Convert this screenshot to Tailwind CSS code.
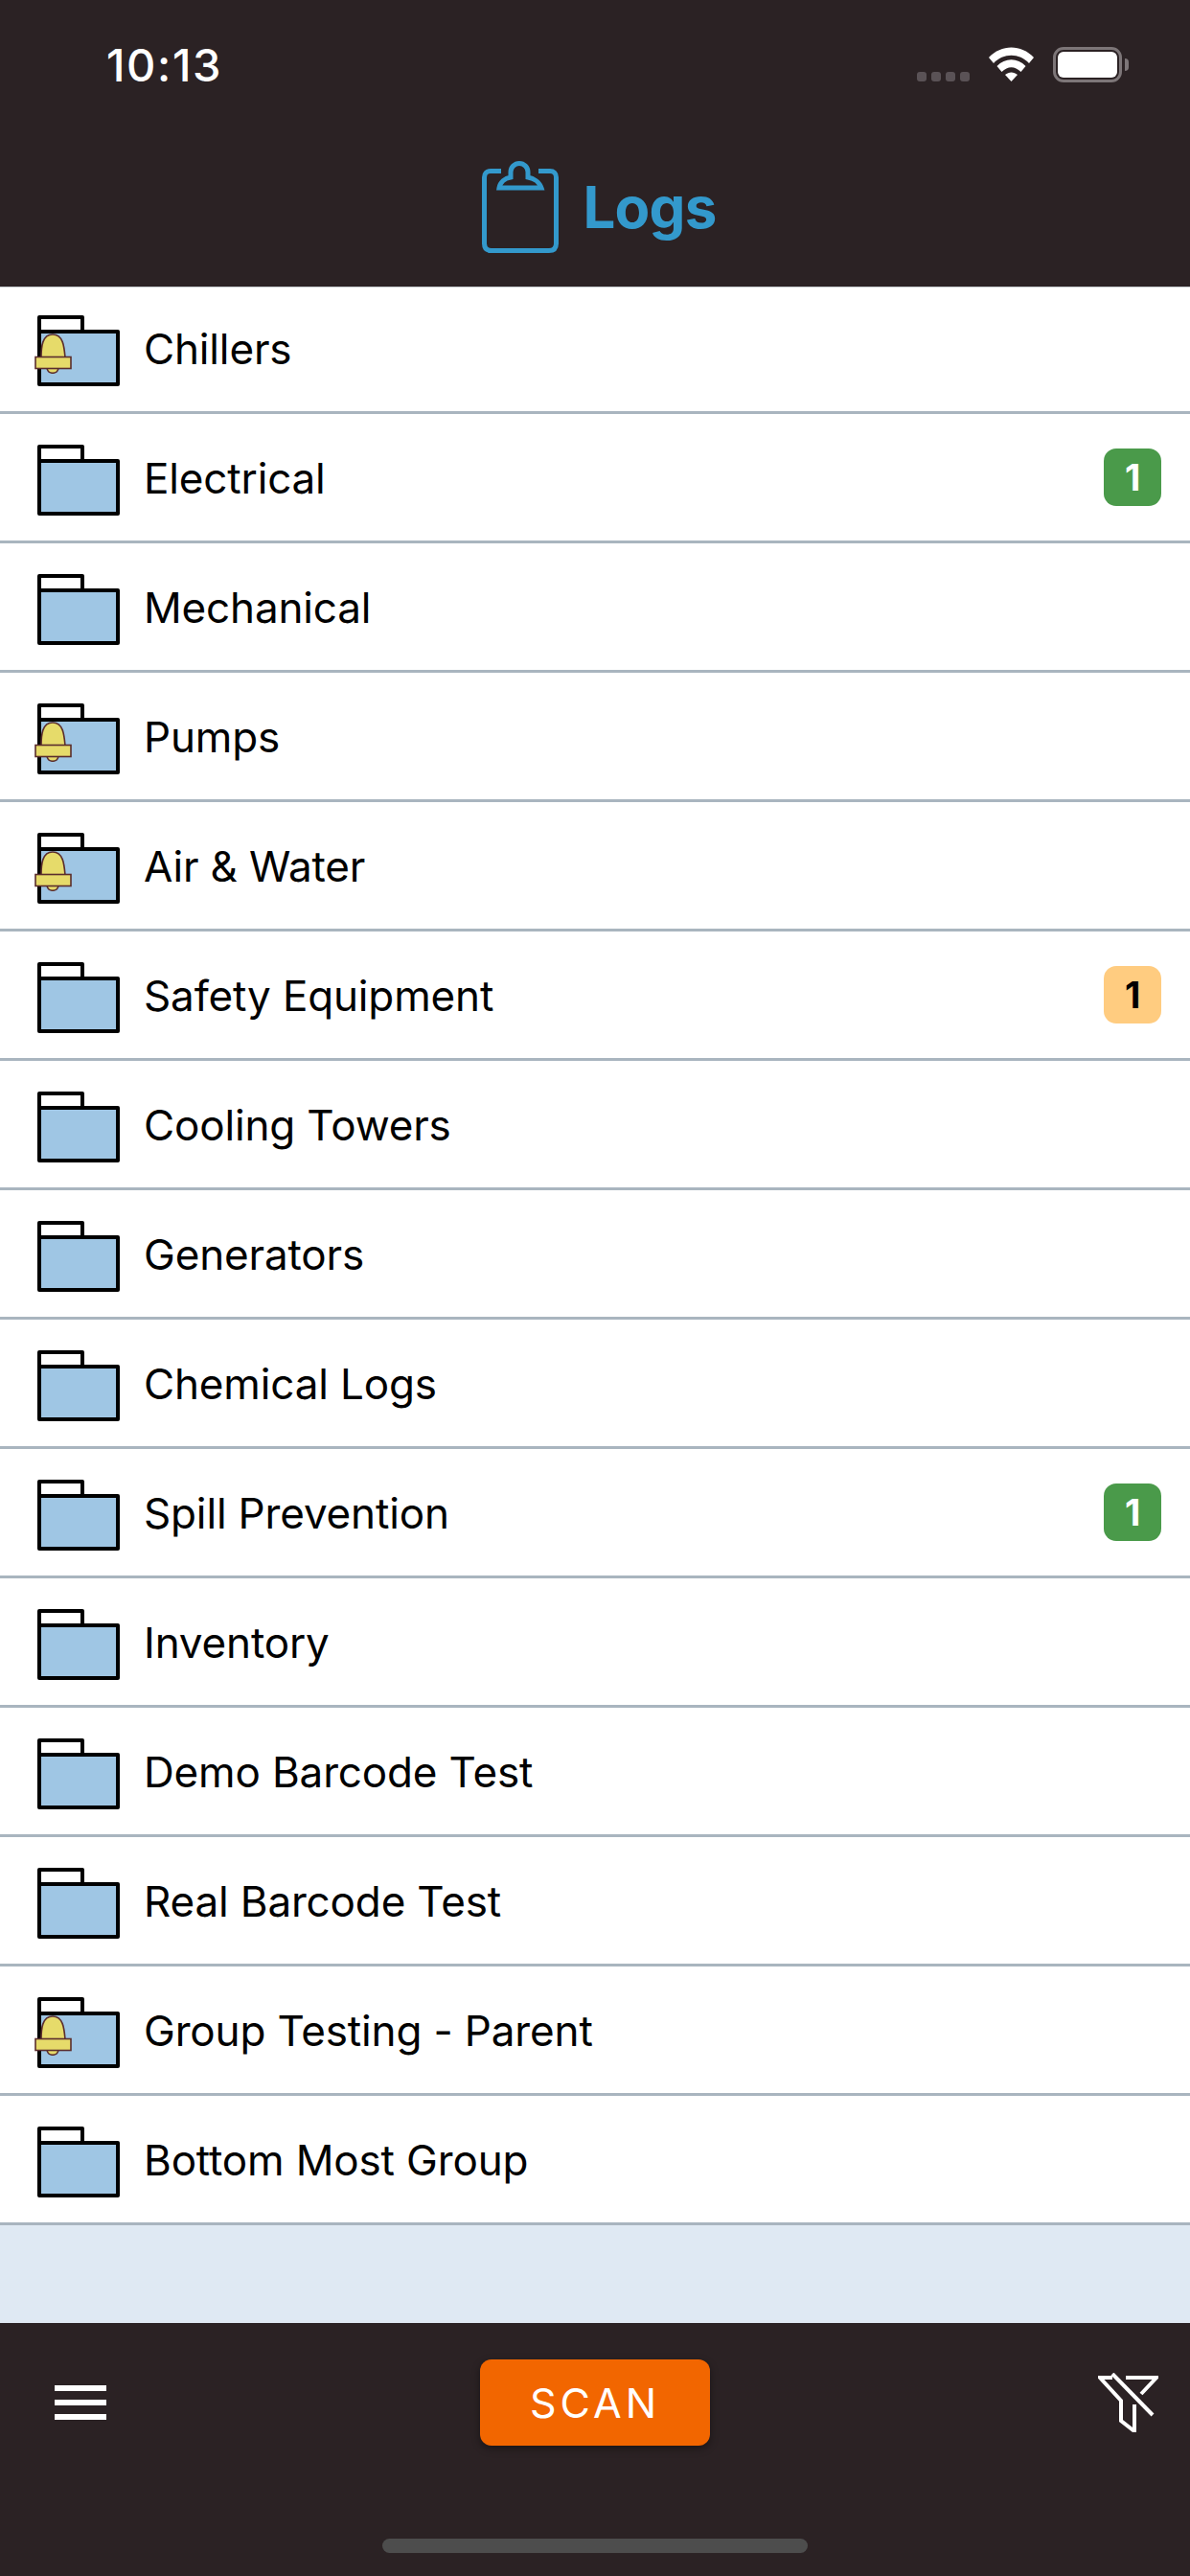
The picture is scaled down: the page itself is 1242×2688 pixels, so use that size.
<!DOCTYPE html>
<html lang="en">
<head>
    <meta charset="UTF-8">
    <meta name="viewport" content="width=device-width, initial-scale=1.0">
    <title>Logs</title>
    <script src="https://cdn.jsdelivr.net/npm/@tailwindcss/browser@4"></script>
</head>
<body class="w-[1242px] h-[2688px] flex flex-col overflow-hidden bg-[#dfe9f3] font-['Inter',sans-serif]">
    <svg width="0" height="0" class="absolute">
        <defs>
            <symbol id="folder" viewBox="0 0 86 74">
                <path d="M2 17V2H47V17" fill="#fff" stroke="#000" stroke-width="4" stroke-linejoin="round"/>
                <rect x="2" y="17" width="82" height="55" fill="#9fc6e4" stroke="#000" stroke-width="4" stroke-linejoin="round"/>
            </symbol>
            <symbol id="bell" viewBox="0 0 39 42">
                <path d="M7 25C7 14 8 1 19 1C30 1 31 14 32 25Z" fill="#e6db6a" stroke="#5a2d2d" stroke-width="1.6"/>
                <path d="M13 36C14 43 24 43 25 36Z" fill="#e6db6a" stroke="#5a2d2d" stroke-width="1.6"/>
                <rect x="1" y="24.500" width="37" height="12" fill="#e6db6a" stroke="#5a2d2d" stroke-width="1.6"/>
            </symbol>
        </defs>
    </svg>

    <header class="relative z-10 h-[300px] shrink-0 bg-[#2b2224] border-b border-[#c8ccd0]">
        <div class="flex h-[168px] items-start">
            <div class="ml-[111px] mt-[38px] text-[47px] leading-[60px] font-medium tracking-[1.6px] text-white">10:13</div>
            <div class="ml-auto mt-[49px] mr-[64px] flex items-start">
                <div class="mt-[26px] flex gap-[5px]">
                    <span class="w-[10px] h-[10px] rounded-[3px] bg-[#5a5256]"></span>
                    <span class="w-[10px] h-[10px] rounded-[3px] bg-[#5a5256]"></span>
                    <span class="w-[10px] h-[10px] rounded-[3px] bg-[#5a5256]"></span>
                    <span class="w-[10px] h-[10px] rounded-[3px] bg-[#5a5256]"></span>
                </div>
                <svg class="ml-[20px]" width="47" height="36" viewBox="0 0 47 36">
                    <path d="M0 11C13 -3 34 -3 47 11L42 17C32 6 15 6 5 17Z" fill="#fff"/>
                    <path d="M8.500 20C17 11 30 11 38.500 20L33.500 26C27 19.500 20 19.500 13.500 26Z" fill="#fff"/>
                    <path d="M17 29C21 25.500 26 25.500 30 29L23.500 36Z" fill="#fff"/>
                </svg>
                <div class="ml-[20px] w-[72px] h-[37px] rounded-[11px] border-[3px] border-[#7d7678] p-[2px]">
                    <div class="w-full h-full rounded-[6px] bg-white"></div>
                </div>
                <div class="ml-[3px] mt-[12px] w-[4px] h-[13px] rounded-r-[4px] bg-[#7d7678]"></div>
            </div>
        </div>
        <div class="flex justify-center items-center">
            <svg class="ml-[9px]" width="80" height="96" viewBox="0 0 80 96" fill="none" stroke="#3399cc" stroke-width="5">
                <path d="M20 10.500H9C5 10.500 2.500 13 2.500 17V86C2.500 91 5 93.500 10 93.500H70C75 93.500 77.500 91 77.500 86V17C77.500 13 75 10.500 71 10.500H59"/>
                <path d="M18 28C19 22 24 18 30 17V11.500A9 9 0 0 1 48 11.500V17C54 18 60 22 62 28Z"/>
            </svg>
            <h1 class="ml-[25px] text-[60px] leading-[70px] font-bold tracking-[-0.8px] text-[#3399cc]">Logs</h1>
        </div>
    </header>

    <ul class="-mt-[3px] bg-white text-[44px] tracking-[-0.15px] text-black">
        <li class="h-[135px] flex items-center border-b-[3px] border-[#a9b5bf]">
            <div class="relative ml-[39px] mt-[6px] w-[86px] h-[74px] shrink-0">
                <svg class="w-[86px] h-[74px]"><use href="#folder"/></svg>
                <svg class="absolute -left-[3px] top-[19px] w-[39px] h-[42px]"><use href="#bell"/></svg>
            </div>
            <span class="ml-[25px] mt-[2px]">Chillers</span>
        </li>
        <li class="h-[135px] flex items-center border-b-[3px] border-[#a9b5bf]">
            <div class="relative ml-[39px] mt-[6px] w-[86px] h-[74px] shrink-0">
                <svg class="w-[86px] h-[74px]"><use href="#folder"/></svg>
            </div>
            <span class="ml-[25px] mt-[2px]">Electrical</span>
            <span class="ml-auto mr-[30px] w-[60px] h-[60px] flex items-center justify-center rounded-[13px] bg-[#4a9a4a] text-[38px] font-bold text-white">1</span>
        </li>
        <li class="h-[135px] flex items-center border-b-[3px] border-[#a9b5bf]">
            <div class="relative ml-[39px] mt-[6px] w-[86px] h-[74px] shrink-0">
                <svg class="w-[86px] h-[74px]"><use href="#folder"/></svg>
            </div>
            <span class="ml-[25px] mt-[2px]">Mechanical</span>
        </li>
        <li class="h-[135px] flex items-center border-b-[3px] border-[#a9b5bf]">
            <div class="relative ml-[39px] mt-[6px] w-[86px] h-[74px] shrink-0">
                <svg class="w-[86px] h-[74px]"><use href="#folder"/></svg>
                <svg class="absolute -left-[3px] top-[19px] w-[39px] h-[42px]"><use href="#bell"/></svg>
            </div>
            <span class="ml-[25px] mt-[2px]">Pumps</span>
        </li>
        <li class="h-[135px] flex items-center border-b-[3px] border-[#a9b5bf]">
            <div class="relative ml-[39px] mt-[6px] w-[86px] h-[74px] shrink-0">
                <svg class="w-[86px] h-[74px]"><use href="#folder"/></svg>
                <svg class="absolute -left-[3px] top-[19px] w-[39px] h-[42px]"><use href="#bell"/></svg>
            </div>
            <span class="ml-[25px] mt-[2px]">Air &amp; Water</span>
        </li>
        <li class="h-[135px] flex items-center border-b-[3px] border-[#a9b5bf]">
            <div class="relative ml-[39px] mt-[6px] w-[86px] h-[74px] shrink-0">
                <svg class="w-[86px] h-[74px]"><use href="#folder"/></svg>
            </div>
            <span class="ml-[25px] mt-[2px]">Safety Equipment</span>
            <span class="ml-auto mr-[30px] w-[60px] h-[60px] flex items-center justify-center rounded-[13px] bg-[#ffcc80] text-[38px] font-bold text-black">1</span>
        </li>
        <li class="h-[135px] flex items-center border-b-[3px] border-[#a9b5bf]">
            <div class="relative ml-[39px] mt-[6px] w-[86px] h-[74px] shrink-0">
                <svg class="w-[86px] h-[74px]"><use href="#folder"/></svg>
            </div>
            <span class="ml-[25px] mt-[2px]">Cooling Towers</span>
        </li>
        <li class="h-[135px] flex items-center border-b-[3px] border-[#a9b5bf]">
            <div class="relative ml-[39px] mt-[6px] w-[86px] h-[74px] shrink-0">
                <svg class="w-[86px] h-[74px]"><use href="#folder"/></svg>
            </div>
            <span class="ml-[25px] mt-[2px]">Generators</span>
        </li>
        <li class="h-[135px] flex items-center border-b-[3px] border-[#a9b5bf]">
            <div class="relative ml-[39px] mt-[6px] w-[86px] h-[74px] shrink-0">
                <svg class="w-[86px] h-[74px]"><use href="#folder"/></svg>
            </div>
            <span class="ml-[25px] mt-[2px]">Chemical Logs</span>
        </li>
        <li class="h-[135px] flex items-center border-b-[3px] border-[#a9b5bf]">
            <div class="relative ml-[39px] mt-[6px] w-[86px] h-[74px] shrink-0">
                <svg class="w-[86px] h-[74px]"><use href="#folder"/></svg>
            </div>
            <span class="ml-[25px] mt-[2px]">Spill Prevention</span>
            <span class="ml-auto mr-[30px] w-[60px] h-[60px] flex items-center justify-center rounded-[13px] bg-[#4a9a4a] text-[38px] font-bold text-white">1</span>
        </li>
        <li class="h-[135px] flex items-center border-b-[3px] border-[#a9b5bf]">
            <div class="relative ml-[39px] mt-[6px] w-[86px] h-[74px] shrink-0">
                <svg class="w-[86px] h-[74px]"><use href="#folder"/></svg>
            </div>
            <span class="ml-[25px] mt-[2px]">Inventory</span>
        </li>
        <li class="h-[135px] flex items-center border-b-[3px] border-[#a9b5bf]">
            <div class="relative ml-[39px] mt-[6px] w-[86px] h-[74px] shrink-0">
                <svg class="w-[86px] h-[74px]"><use href="#folder"/></svg>
            </div>
            <span class="ml-[25px] mt-[2px]">Demo Barcode Test</span>
        </li>
        <li class="h-[135px] flex items-center border-b-[3px] border-[#a9b5bf]">
            <div class="relative ml-[39px] mt-[6px] w-[86px] h-[74px] shrink-0">
                <svg class="w-[86px] h-[74px]"><use href="#folder"/></svg>
            </div>
            <span class="ml-[25px] mt-[2px]">Real Barcode Test</span>
        </li>
        <li class="h-[135px] flex items-center border-b-[3px] border-[#a9b5bf]">
            <div class="relative ml-[39px] mt-[6px] w-[86px] h-[74px] shrink-0">
                <svg class="w-[86px] h-[74px]"><use href="#folder"/></svg>
                <svg class="absolute -left-[3px] top-[19px] w-[39px] h-[42px]"><use href="#bell"/></svg>
            </div>
            <span class="ml-[25px] mt-[2px]">Group Testing - Parent</span>
        </li>
        <li class="h-[135px] flex items-center border-b-[3px] border-[#a9b5bf]">
            <div class="relative ml-[39px] mt-[6px] w-[86px] h-[74px] shrink-0">
                <svg class="w-[86px] h-[74px]"><use href="#folder"/></svg>
            </div>
            <span class="ml-[25px] mt-[2px]">Bottom Most Group</span>
        </li>
    </ul>

    <footer class="mt-auto h-[264px] shrink-0 flex flex-col bg-[#2b2224]">
        <div class="grid grid-cols-3 items-center pt-[38px] h-[128px]">
            <div class="ml-[57px] w-[54px] flex flex-col gap-[9px]">
                <span class="h-[6px] bg-white"></span>
                <span class="h-[6px] bg-white"></span>
                <span class="h-[6px] bg-white"></span>
            </div>
            <button class="justify-self-center w-[240px] h-[90px] rounded-[12px] bg-[#f26600] text-[43px] tracking-[4px] text-white shadow-[0_3px_8px_rgba(0,0,0,0.4)]">SCAN</button>
            <svg class="justify-self-end mr-[33px]" width="63" height="62" viewBox="0 0 63 62" fill="none" stroke="#fff" stroke-width="4">
                <path d="M15 5H2L24 29V50L38 61V33"/>
                <path d="M29 5H61L45 22"/>
                <path d="M15 1L57 44"/>
            </svg>
        </div>
        <div class="mx-auto mt-[97px] w-[444px] h-[15px] rounded-full bg-[#4d4d4d]"></div>
    </footer>
</body>
</html>
